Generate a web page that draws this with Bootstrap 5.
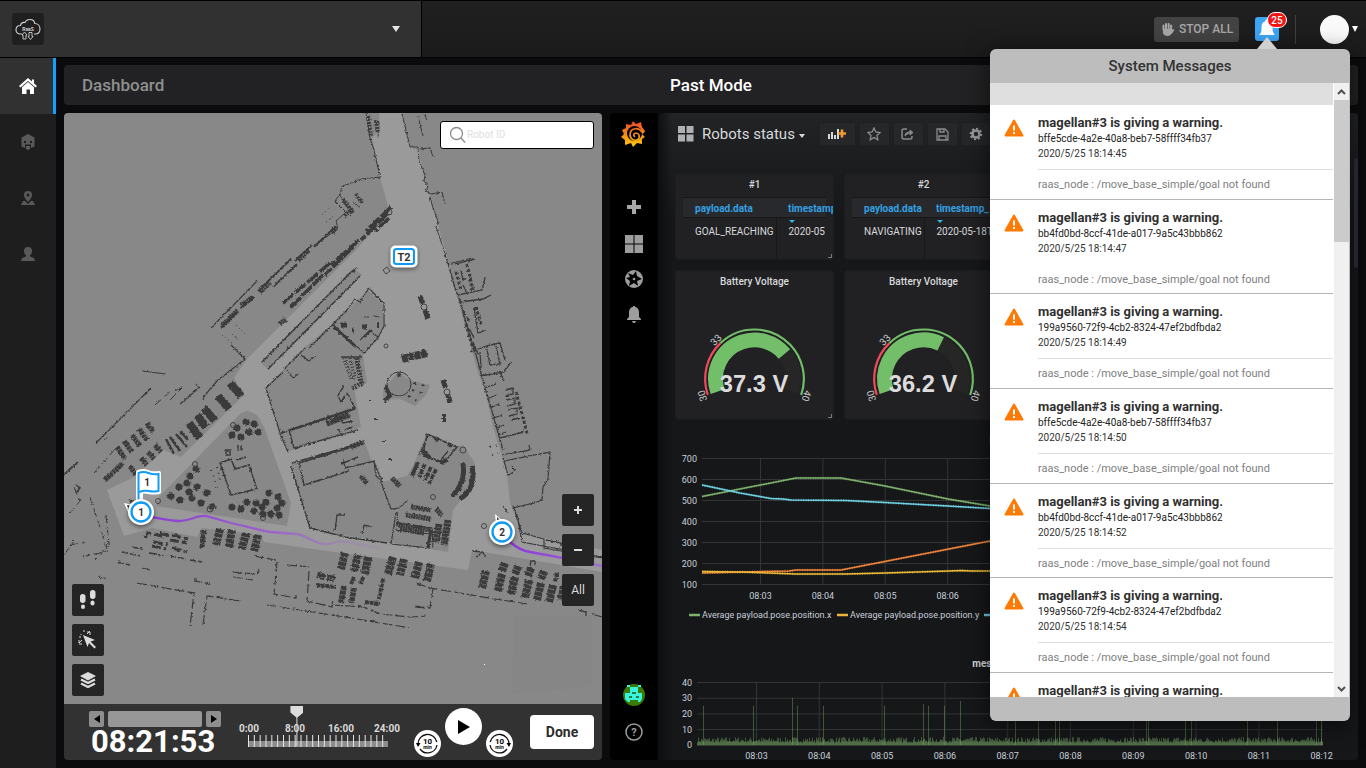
<!DOCTYPE html>
<html lang="en">
<head>
<meta charset="utf-8">
<meta name="viewport" content="width=device-width, initial-scale=1">
<title>Dashboard</title>
<link href="https://cdn.jsdelivr.net/npm/bootstrap@5.3.0/dist/css/bootstrap.min.css" rel="stylesheet">
<style>
body{font-family:Roboto,"Liberation Sans",sans-serif;background:#0b0b0d;color:#d8d9da;font-size:12px;line-height:16px}
button{font-family:inherit}
.topbar{height:58px;border-top:1px solid #000;border-bottom:1px solid #000;background:linear-gradient(#202020,#1b1b1b)}
.site-picker{width:422px;background:#313131;border-right:1px solid #000;padding:0 20px 0 12px}
.logo-box{width:32px;height:32px;background:#1f1f1f;border-radius:3px}
.plain-btn{background:none;border:0;padding:0;color:#e4e4e4;display:flex;align-items:center}
.top-tools{padding-right:8px}
.stop-btn{height:25px;width:85px;background:#434343;color:#a8a8a8;border:0;border-radius:3px;font-size:12px;font-weight:500;white-space:nowrap}
.bell-btn{width:24px;height:24px;background:#3da6f5;border:0;border-radius:3px;padding:0}
.bell-count{top:-5px;left:12px;width:20px;height:16px;border:1px solid #fff;border-radius:8px;background:#f51414;color:#fff;font-size:10px;line-height:15px;font-weight:500;text-align:center}
.rule-v{width:1px;height:29px;background:#404040;margin:0 8px}
.avatar{width:29px;height:29px;border-radius:50%;background:#fafafa;display:block}
.side-nav{width:56px;background:#1e1e1e;flex:none}
.side-nav a{height:56px;color:#595959;display:flex;align-items:center;justify-content:center}
.side-nav a.active{background:#313131;box-shadow:inset -3px 0 #12a0ff}
.workspace{padding:7px 8px 8px;gap:8px;min-width:0}
.title-strip{height:40px;background:#222224;border-radius:4px;font-size:17px;font-weight:500;padding:0 18px;display:grid;grid-template-columns:1fr auto 1fr;align-items:center}
.title-strip h1{font-size:17px;font-weight:500;margin:0;color:#8f8f8f}
.panes{display:grid;grid-template-columns:269fr 374fr;gap:8px}
.pane{border-radius:4px;overflow:hidden;min-width:0}
.map-area{background:#888;overflow:hidden;min-height:520px}
.map-area>svg{position:absolute;width:100%;height:100%}
.search-box{top:8px;right:8px;width:154px;height:28px;background:#fff;border:1px solid #000;border-radius:3px;padding-left:8px}
.search-box input{border:0;outline:0;width:100px;font-size:10px;background:none;padding:0}
.search-box input::placeholder{color:#dedede;opacity:1}
.tool-stack{gap:8px}
.tool-stack button{width:32px;height:32px;background:#252525;border:0;border-radius:2px;color:#dcdcdc;font-size:12px;padding:0;display:flex;align-items:center;justify-content:center}
.stack-left{left:8px;bottom:8px}
.stack-right{right:8px;bottom:98px}
.player{height:56px;background:#323232;padding:0 8px 0 25px}
.clock-box{width:132px;padding-top:3px}
.step-btn{width:15px;height:16px;background:#8e8e8e;border:0;border-radius:2px;padding:0;display:flex;align-items:center;justify-content:center;flex:none}
.date-btn{height:16px;flex:1;background:#979797;border:0;border-radius:2px}
.clock{font-size:31px;line-height:30px;font-weight:700;color:#fff;padding-left:2px}
.timeline{width:184px;height:56px;display:grid;grid-template-rows:16px 14px 26px;margin-left:5px}
.hours{grid-row:2;grid-column:1;display:grid;grid-template-columns:repeat(4,1fr);text-align:center;font-size:10px;line-height:17px;font-weight:700;color:#dadada}
.ticks{grid-row:3;grid-column:1;width:140px;height:12px;margin:1px 0 0 22px}
.timeline input{grid-row:1/4;grid-column:1;appearance:none;-webkit-appearance:none;background:none;width:152px;height:56px;margin:0 16px;padding:0}
.timeline input::-webkit-slider-thumb{-webkit-appearance:none;width:13px;height:41px;margin-top:-12px;background:#dcdcdc;border:0;clip-path:polygon(0 0,13px 0,13px 7px,7px 12px,7px 100%,6px 100%,6px 12px,0 7px)}
.disc{border:0;border-radius:50%;background:#fff;padding:0;display:flex;align-items:center;justify-content:center}
.disc-s{width:27px;height:27px;margin-top:22px}
.disc-l{width:37px;height:37px;margin-bottom:11px}
.done-btn{width:64px;height:34px;border:0;border-radius:4px;background:#fff;color:#2c2c2c;font-size:14px;font-weight:700;margin-left:17px}
.graf{background:#161719}
.graf-nav{width:48px;background:#000;flex:none;padding:8px 0 19px}
.graf-nav a{display:flex}
.nav-first{margin-top:53px}
.nav-next{margin-top:13px}
.graf-body{padding:0 17px;background:linear-gradient(90deg,#0d0e0f 0,#16171900 14px),linear-gradient(#212325,#161719 100px);min-width:0}
.graf-tools{height:60px;padding:9px 0 27px 3px}
.graf-title{font-size:15px;color:#d8d9da}
.g-btn{width:31px;height:24px;background:#262729;border:1px solid #1f2022;border-radius:2px;padding:0;display:flex;align-items:center;justify-content:center;flex:none;color:#8a8b8c}
.g-btn.wide{width:37px;margin-left:14px}
.tiles{display:grid;grid-template-columns:repeat(4,minmax(0,1fr));gap:10px}
.tile{background:#212124;border:1px solid #1c1d1f;border-radius:3px;overflow:hidden;font-size:10px}
.tile-top{height:87px;padding:0 7px}
.tile-low{height:150px}
.of-1{grid-column:1}
.of-2{grid-column:2}
.tile-top.tile{grid-row:1}
.tile-low.tile{grid-row:2}
.tile h2,.chart-box h2{font-size:10px;font-weight:500;line-height:21px;height:20px;margin:0;text-align:center;color:#d8d9da}
.chart-box{margin-top:10px}
.chart-box h2{font-weight:700}
.tile-table{border-collapse:collapse;white-space:nowrap;margin-top:3px;table-layout:fixed;width:100%}
.tile-table th{height:20px;background:#28292c;border-top:1px solid #151618;border-bottom:1px solid #151618;color:#33a2e5;font-weight:700;padding:3px 0 0 12px}
.tile-table td{height:42px;padding:6px 0 0 12px;vertical-align:top;border-bottom:1px solid #1a1b1d}
.tile-table td:first-child{border-right:1px solid #17181a}
.tile-table .c1{width:93px}
.tile-table .c2{width:72px}
.sort-mark{border:3px solid transparent;border-top-color:#33b5e5;top:2px;left:12px}
.corner-mark{right:1px;bottom:1px;width:4px;height:4px;border-right:1px solid #777;border-bottom:1px solid #777}
.chart-box svg,.tile-low svg{display:block;width:100%;height:auto}
.graf-scroll{right:0;top:45px;width:4px;height:110px;background:#2c2d3a;border-radius:2px}
.chart-txt{font-size:9px;fill:#c7d0d9}
.popup{top:49px;right:16px;width:360px;height:672px;border-radius:6px;background:#bdbdbd;z-index:5;color:#333;box-shadow:0 4px 24px #0009}
.popup-arrow{top:-12px;left:267px;width:20px;height:12px;background:#d0d0d0;clip-path:polygon(50% 0,100% 100%,0 100%)}
.popup h2{height:34px;line-height:35px;font-size:15px;font-weight:500;margin:0;text-align:center}
.popup-body{height:614px;background:#fff;overflow:hidden}
.popup-gap{height:22px;background:#dfdfdf}
.msg{height:95px;border-bottom:1px solid #b5b5b5;padding:10px 0 0 14px;display:flex;gap:14px}
.msg:nth-child(3n){height:94px}
.msg svg{flex:none;margin-top:4px}
.msg h3{font-size:13px;line-height:16px;font-weight:700;margin:0;color:#303030}
.msg-id{font-size:10px;line-height:15px;color:#222}
.msg-date{font-size:10px;line-height:15px;color:#333;height:24px;border-bottom:1px solid #dedede}
.msg:nth-child(3) .msg-date{border-color:#fff}
.msg-text{font-size:11px;line-height:30px;color:#808080}
.bar-col{width:17px;background:#f0f0f0;border-left:1px solid #fff;border-right:1px solid #bdbdbd;flex:none}
.bar-thumb{height:142px;background:#cbcbcb}
</style>
</head>
<body>
<div class="d-flex flex-column min-vh-100 position-relative">
<header class="topbar d-flex justify-content-between flex-shrink-0">
  <div class="site-picker d-flex align-items-center justify-content-between">
    <a href="#" class="logo-box d-block" aria-label="RaaS home">
      <svg width="32" height="32" viewBox="0 0 32 32" fill="none" stroke="#d0d0d0"><path d="M10 21H8.500C5.500 21 4 19 4 17c0-3 2-4.500 4.500-4.500C9 10 10.500 9 13 9.500 14 7 16 6.500 18 6.500c3 0 4.500 2 4.700 4C26 10.500 28 13 28 16c0 3-2 5-5 5h-1" stroke-width="1.100"/><path d="M12.500 19l2.500 3h-1v4h-3v-4h-1zM18.500 26.500l-2.500-3h1v-4h3v4h1z" stroke-width=".9"/><text x="16" y="17.500" font-size="5" font-weight="700" fill="#d0d0d0" stroke="none" text-anchor="middle">RaaS</text></svg>
    </a>
    <button class="plain-btn" aria-label="Choose site"><svg width="10" height="8"><path d="M1 1h8L5 7z" fill="#e4e4e4"/></svg></button>
  </div>
  <div class="top-tools d-flex align-items-center">
    <button class="stop-btn d-flex align-items-center justify-content-center gap-1 px-0"><svg width="15" height="15" viewBox="0 0 15 15" fill="none" stroke="#a8a8a8" stroke-width="2" stroke-linecap="round"><path d="M3.500 8V3.500M6 7V2M8.600 7V2M11.100 8V3.500M13.200 8l-2 3"/><path d="M3 7h8.500v3.500c0 2-1.500 3.500-4 3.500S3 12.500 3 10.500z" fill="#a8a8a8" stroke="none"/></svg><span>STOP ALL</span></button>
    <button class="bell-btn position-relative ms-3 me-2" aria-label="System messages"><svg width="24" height="24"><path d="M4 18c2.500-2 2.500-4 2.500-8C6.500 6 9 4.500 10.500 4.300V2.500h3v1.800C16 5 17.500 7 17.500 10c0 4 .5 6 2.500 8z" fill="#fff"/></svg><span class="bell-count position-absolute">25</span></button>
    <span class="rule-v"></span>
    <button class="plain-btn ms-3" aria-label="Account"><span class="avatar"></span><svg width="9" height="8"><path d="M3 1h6L6 7z" fill="#fff"/></svg></button>
  </div>
</header>

<div class="d-flex flex-grow-1">
<nav class="side-nav">
  <a href="#" class="active" aria-label="Home"><svg width="18" height="18" viewBox="0 0 18 18"><path d="M9 1L0 9l1.500 1.500L9 4l7.500 6.500L18 9l-3-2.700V2.500h-2v2z" fill="#fff"/><path d="M3 10.200L9 5l6 5.200V17h-4v-4.500H7.500V17H3z" fill="#fff"/></svg></a>
  <a href="#" aria-label="Robots"><svg width="16" height="18" viewBox="0 0 16 18"><path d="M8 1l6.500 3.500v9L11 15v-3.500H5V15l-3.500-1.500v-9z" fill="#595959"/><path d="M6 13h4v3l-2 1-2-1z" fill="#595959"/><circle cx="5" cy="9" r="1.200" fill="#1e1e1e"/><circle cx="11" cy="9" r="1.200" fill="#1e1e1e"/></svg></a>
  <a href="#" aria-label="Places"><svg width="16" height="18" viewBox="0 0 16 18" fill="#595959"><path fill-rule="evenodd" d="M8 2a4 4 0 0 0-4 4c0 3 4 7 4 7s4-4 4-7a4 4 0 0 0-4-4zm0 2.500a1.500 1.500 0 1 1 0 3 1.500 1.500 0 0 1 0-3z"/><path d="M1 16l2-4h2l3 3 3-3h2l2 4z"/></svg></a>
  <a href="#" aria-label="Users"><svg width="16" height="18" viewBox="0 0 16 18" fill="#595959"><path d="M8 2c3 0 4 1.800 4 4 0 2-1 3.500-2 4.500v1l4 1.500 1 3H1l1-3 4-1.500v-1C5 9.500 4 8 4 6c0-2.200 1-4 4-4z"/></svg></a>
</nav>

<main class="workspace d-flex flex-column flex-grow-1">
  <div class="title-strip"><h1>Dashboard</h1><span class="text-white">Past Mode</span></div>
  <div class="panes flex-grow-1">
    <section class="pane d-flex flex-column">
      <div class="map-area position-relative flex-grow-1">
        <svg viewBox="64 113 538 591" preserveAspectRatio="xMinYMin slice" role="img" aria-label="Site map">
          <defs>
            <filter id="rough" x="0" y="0" width="100%" height="100%"><feTurbulence type="fractalNoise" baseFrequency=".45" numOctaves="2" seed="4"/><feDisplacementMap in="SourceGraphic" scale="3" xChannelSelector="R" yChannelSelector="G"/></filter>
            <linearGradient id="trail" gradientUnits="userSpaceOnUse" x1="152" y1="0" x2="385" y2="0"><stop stop-color="#8b3fd6"/><stop offset=".5" stop-color="#9c62cb"/><stop offset="1" stop-color="#9a8aab" stop-opacity=".3"/></linearGradient>
            <linearGradient id="trail2" gradientUnits="userSpaceOnUse" x1="510" y1="0" x2="602" y2="0"><stop stop-color="#8b35dd"/><stop offset="1" stop-color="#a070cc"/></linearGradient>
          </defs>
          <path fill="#9a9a9a" d="M379 113H402L410 147H418L423 173 430 197 448 260 457 297 478 373 485 390 493 427 507 473 510 503 522 533 602 550V572L472 550 468 570 341 553 264 542 261 535 202 528 197 537 152 528 124 536 107 490 134 477 164 450 181 457 244 395 234 378 246 360 354 252 390 212 382 185 380 177 372 138 380 130z"/>
          <g fill="#888">
            <path d="M241 413L248 411 257 415 264 427 291 503 287 526 156 506 159 497z"/>
            <path d="M261 363L353 268 362 275 268 369z"/>
            <path d="M266 388L306 346 332 325 368 290 383 305 383 327 378 340 363 355 367 383 354 387 361 427 287 452 281 433z"/>
            <path d="M291 463L365 443 375 470 382 482 407 476 415 462 418 453 427 433 457 447 463 445 475 463 473 483 453 510 448 552 330 533 311 528z"/>
            <path d="M398 372L410 380 430 385 426 395 415 406 400 399 383 400 383 390z"/>
            <path d="M514 616h78v70l-80 8z" fill="#868686"/>
          </g>
          <g fill="none" stroke="#3a3a3a" filter="url(#rough)">
            <path stroke-width="1" d="M366 113l4 25 4 12 4 18 3 9M381 177l-20 2-9 4-10 3-2 8-5 7 8 8 8 8M340 195l5 10M352 202l8 5M345 213l-9 8 2 7-18 14M402 114l8 33h8l1 14 6 14-1 6 4 5-2 5 5 3 11-2 3 12M418 116l5 20 M424 114l3 6M420 149l10-1 3 9M430 197l3 11 5 13-2 6 7 20 5 17 24-6M374 120l5 2-1 15"/>
            <path stroke-width="4" stroke-dasharray="2 1" d="M368 116l3 20M376 121l2 12M343 199l10 14M356 194l6 9M345 216l8-9"/>
            <path stroke-width="1.300" d="M448 263l7 25 5 13 4 15 7 23 6 19 8 30 8 27 10 35M455 264l20-5M458 295l24-5 3-12M460 302l23-3 8-4M470 352l20-7 10-2 5 17M480 376l24-4 7-10M484 388l12-4M491 407l8-3M494 418l8-3M496 428l8-3M498 435l8-3M500 438l24-6M489 398l8-3M461 271l2 9 3-2M463 285l4 8M470 290l3-3M463 310l6 11M474 308l4 25 8-3M469 328l5 10M473 342l5 12M487 349l3 16 10-1-4-18M480 352l1 16M500 372l4 9M505 390l8-2v6l-8 2M506 400l9-2v6l-8 2M508 410l9-2v6l-8 2M511 420l8-2"/>
            <path stroke-width="3" stroke-dasharray="3 2" d="M456 272l5 18M467 264l6 26M476 307l5 17M466 324l8 28M516 392l11 41"/>
            <path stroke-width="1.200" d="M502 455l28-5-1-5M503 458l5 17 6-3M504 461l46-9-2 27-5 8-1 13-8 3-21 5 4 7 5 27 80 15M512 466l3 5M513 505l9 28M508 513l-5-7M522 533l22 6v9l58 10"/>
            <path stroke-width="3.500" stroke-dasharray="14 2" d="M391 207L366 231M388 213L361 240M359 240L331 265M354 246L325 275M330 263L282 304M323 275L289 309M389 218l-14 13"/>
            <path stroke-width="1.200" d="M211 328L257 281"/>
            <path stroke-width="2" d="M258 291L291 259M273 287L297 264M221 328L237 312M241 308L254 297M295 261L312 245M314 247L336 226"/>
            <path stroke-width="5" stroke-dasharray="2 .5" d="M222 326L238 310M241 306L253 297M260 292L270 283M298 260L309 250M332 232L336 228M280 324l6-5"/>
            <path stroke-width="1" stroke-dasharray="1 3" d="M222 335l10 8M236 325l10 10M232 334l6 6M326 222l10-8M322 215l8-8"/>
            <path stroke-width="1.600" d="M262 362L350 273 357 268M268 369L360 276"/>
            <path stroke-width="1.200" d="M231 345l14 14-28 22-12 14-2 5M266 388l17-16M284 369l21-21M309 348l23-23 14-14 9-12 5 3 9-14 15 16v22l-6 12-14 15-31-28M142 371l24 3M180 404l20-17M196 384l3 4M151 388l-22 22-33 33M266 388l6 20 9 28 7 16M301 355l8 6 6-5M287 370l6 8 5-4M360 340l10-10 8 7M364 337l8-7M364 317h5M374 316l6 1"/>
            <path stroke-width="2.500" d="M334 327l22 20"/>
            <path stroke-width="5" d="M341 325h6M352 330h2M362 327h5M377 325h2"/>
            <path stroke-width="5" stroke-dasharray="2 1" d="M357 358l4 25M352 388l12-5"/>
            <path stroke-width="4" stroke-dasharray="1 2" d="M344 358l8 22M350 358l6 22"/>
            <path stroke-width="1.400" d="M341 357h21M344 385l-6 11 3 6 4-7M347 393l8 15-66 22 5 18 64-18M289 431l66-22M295 449l7-3M299 463l5 22 45-14M292 463l70-20M341 464l17-7M299 463l50-15M291 466l19 62 35 9 42 6M343 459l2 9 30-7M382 480l-4-8-4-10M281 433l8-2M326 423l2-7 4 6 6-8 5 9 10-2M338 429l5 8M344 430l9-3"/>
            <path stroke-width="5" stroke-dasharray="3 .5" d="M327 424l23-9M333 421l16-7M350 447l14-5"/>
            <circle cx="399" cy="384" r="12"/><path stroke-width="4" d="M385 386l5 10-6 5M398 374l2 2"/>
            <path stroke-width="2" stroke-dasharray="2 6" d="M414 383l15 4M412 390l14 4M408 396l11 6"/>
            <path stroke-width="8" stroke-dasharray="6 .5" d="M402 359l25-6"/><path stroke-width="5" stroke-dasharray="8 7 9" d="M420 296l8 23M443 380l8 25"/>
            <path stroke-width="1.400" d="M427 434l30 13-14 17-20-10zM428 436l-9 19M423 456l17 5 8-10"/><path stroke-width="4" d="M435 438l4 2M448 444l4 2M444 414v8M376 418v2M384 441v1M390 459v1M371 400v1M422 450l8 8M440 462l8-2"/>
            <path stroke-width="4" d="M418 462l-6 14"/><path stroke-width="3.500" stroke-dasharray="5 1" d="M425 464l-6 13M431 467l-6 13M436 469l-7 15"/>
            <path stroke-width="5" d="M463 463c2 14-2 25-11 33M472 466c3 15-1 26-12 33"/>
            <path stroke-width="1.200" d="M374 462l2 14 5 4 2 8 8 21 8-1 9-8M396 512l-5 32 39 4M397 512l1 11 34 5 1 20M395 530l35 4-3 14"/>
            <path stroke-width="5" stroke-dasharray="2 .5" d="M411 507l20 3M406 515l25 4M396 524l35 6M400 529l24 4M436 509l6 6M361 476l6 8M392 478l8 8"/>
            <path stroke-width="7" stroke-dasharray="3 .5" d="M439 524l-3 18M448 520l-4 25"/>
            <path stroke-width="3" d="M431 530l-3 18"/>
            <path stroke-width="8" stroke-dasharray="16 0" d="M230 383l11 13M218 396l11 13M204 408l11 13M197 415l9 12M189 423l11 15"/>
            <path stroke-width="2.500" d="M166 439l8 15M170 437l10 14M176 434l11 13M180 431l8 9M239 388l4 7M188 425l5 10"/>
            <path stroke-width="5" stroke-dasharray="3 .5" d="M117 447l8 12M124 441l8 11M132 435l8 11M139 429l8 11M147 423l6 9M130 466l6 9M141 458l6 7M148 452l6 7M155 445l6 7M105 480l18-17"/>
            <path stroke-width="1" stroke-dasharray="8 4" d="M94 473l22-25M74 487l6 14-10 12M70 545l14-3M90 497l17 52M82 557l26-6M64 555l10-14M155 405l18-16M170 400l12-12M175 391l10-6M104 440l4-3M106 515l3 30-14 15M98 577l12 2"/>
            <path stroke-width="1.500" d="M64 475l14-13M76 485l4 3-4 5M129 500l5 3"/>
            <path stroke-width="3" stroke-dasharray="9 3" d="M145 538l3-5 18 4M154 542l14 3M170 540l17 3M152 546l14 3M172 548l15 4M160 533l10 3M172 535l16 4"/>
            <path stroke-width="1.500" stroke-dasharray="6 2" d="M122 552l18 4M118 562l12 3M150 553l16 3M170 556l16 3M190 560l12 2M132 547l10 2"/>
            <path stroke-width="1.200" stroke-dasharray="10 3" d="M136 583l58 10-4 33M203 625l4-29 33 5M267 605l84 13 59 10M142 568l8 2M195 578v3l15 3M232 572l25 2 2-5M233 577l20 3M254 556l22 4M277 562l-3 32 22 4v-3M287 565l23 2M309 571l-2 30 25 6 1-8M332 605l32 2 16 7 30 3 16-1M416 583l14 5 65 11 33 5M433 588l-3 20-15-2M415 607l10 1"/>
            <g stroke-width="8" stroke-dasharray="4 .6">
              <path stroke-width="5" d="M204 530l-2 18"/><path d="M220 529l-4 16M232 530l-3 17M246 533l-4 16M258 535l-4 16M345 553l-4 16M358 555l-4 16M368 557l-3 17M393 557l-5 17M404 559l-4 16M419 562l-4 16M431 564l-4 17M486 571l-4 17M502 574l-4 17M515 577l-4 17M529 580l-4 18M541 583l-4 17M553 585l-4 17M564 586l-3 14M505 563l-3 8M518 566l-3 8M531 568l-3 8M544 571l-3 8M322 573l-2 6M332 575l-2 6"/>
              <path stroke-width="4" d="M557 573l-2 9M383 579l-4 20M354 577l-3 7M363 577l-2 7M365 602l15 2M316 585l20 2"/><path stroke-width="6" d="M344 586l-3 17M354 588l-3 15"/>
            </g>
            <path stroke-width="1.300" d="M472 551l11 1 2 5M482 552l-5 5M530 565l1-4h4v4M546 540l20 4M560 545h12M335 530l2-15h8M362 533l2-8 8 2M578 610l8 2v4M592 614l10 3"/>
            <path stroke-width="7" stroke-linecap="round" stroke-dasharray="0 3" d="M237 428h3M246 422h3M254 424h3M232 435h3M241 437h1M249 432h2M258 432h2M196 469h2M190 476h2M179 487h2M187 483h1M171 496h2M180 500h2M192 498h3M189 492h1M197 487h2M201 503h2M207 493h2M212 507h2M232 507h2M241 509h2M247 502h2M256 503h2M266 502h2M269 493h1M278 497h2M254 511h2M262 507h1M263 514h2M271 514h1M279 515h1M277 508h2M282 503h1"/>
            <path stroke-width="1.500" d="M220 463l11-4 4 10 14-4 8 24-26 6zM236 460l10-3M226 450h4v5h-4zM238 445v6M241 445v6"/>
            <path stroke-width="2" stroke-dasharray="1 5" d="M211 470l6 18M217 467l4 15M490 447l8-2M492 455l6-2"/>
          </g>
          <g fill="none" stroke="#444"><circle cx="389" cy="212" r="3"/><path d="M383 270l4-3 3 4-4 3z"/><circle cx="386" cy="346" r="2"/><circle cx="463" cy="450" r="3"/><circle cx="433" cy="497" r="2.500"/><circle cx="484" cy="526" r="2.500"/><circle cx="158" cy="501" r="2.500"/><circle cx="195" cy="464" r="2.500"/><circle cx="210" cy="509" r="3"/><circle cx="263" cy="518" r="2.500"/><circle cx="233" cy="425" r="2.500"/><circle cx="424" cy="307" r="3"/><circle cx="447" cy="392" r="3"/></g>
          <g fill="none" stroke-width="2.300" stroke-linecap="round"><path stroke="url(#trail)" d="M152 517C162 519 170 521 179 521C190 521 197 515 206 516L231 523C245 526 258 530 271 532L297 534C308 536 315 544 324 544C330 545 336 541 341 541C352 542 365 546 380 548"/><path stroke="url(#trail2)" d="M510 542C516 547 522 551 530 552L563 558 602 566"/></g>
          <path d="M484 664h1v1h-1z" fill="#fff"/>
          <g font-weight="700" font-size="11" text-anchor="middle" fill="#333">
            <rect x="390.500" y="245.500" width="27" height="22" rx="5" fill="#fff" style="filter:drop-shadow(0 2px 2px #0006)"/><rect x="394" y="249" width="20" height="15" rx="2.500" fill="#fff" stroke="#0c99f7" stroke-width="2"/><text x="404" y="261">T2</text>
            <path d="M138 505V472q5-2 10 0t11 1v19q-5 1-11 0l-7-1v13" fill="#fff" stroke="#fff" stroke-width="4" stroke-linejoin="round"/><path d="M138.500 505V473q5-2 10 0t10 1v17q-5 1-10 0t-9 1" fill="#fff" stroke="#129df8" stroke-width="2"/><text x="147" y="486" font-size="10">1</text>
            <path d="M124 503l9 2-5 7zM495 514l10 9-9 3z" fill="#fff"/><path d="M127 505l5 1-3 5zM497 517l5 5-5 1z" fill="#333"/>
            <g style="filter:drop-shadow(0 2px 2px #0007)"><circle cx="141" cy="512" r="13" fill="#fff"/><circle cx="502" cy="532" r="13" fill="#fff"/></g><circle cx="141" cy="512" r="9.500" fill="#fff" stroke="#0c99f7" stroke-width="2.300"/><circle cx="502" cy="532" r="9.500" fill="#fff" stroke="#0c99f7" stroke-width="2.300"/><text x="141" y="516" font-size="10">1</text><text x="502" y="536" font-size="10">2</text>
          </g>
        </svg>
        <label class="search-box position-absolute d-flex align-items-center"><svg width="18" height="18" fill="none" stroke="#8c8c8c" stroke-width="1.300"><circle cx="7.500" cy="7.500" r="6"/><path d="M12 12l4 4.500"/></svg><input type="text" placeholder="Robot ID" aria-label="Robot ID"></label>
        <div class="tool-stack stack-left position-absolute d-flex flex-column">
          <button aria-label="Footprints"><svg width="18" height="20" viewBox="0 0 18 20" fill="#dcdcdc"><rect x="1" y="4" width="5.500" height="9" rx="2.700"/><rect x="2" y="14.500" width="4" height="4.500" rx="2"/><rect x="11" y="0" width="5.500" height="9" rx="2.700"/><rect x="11.500" y="10.500" width="4" height="5" rx="2"/></svg></button>
          <button aria-label="Select area"><svg width="20" height="20" viewBox="0 0 20 20" fill="#dcdcdc"><path d="M5 5l12 5-4.500 1.500L18 17l-1.500 1.500-5.500-5.500L9.500 17z"/><path d="M9 2h3v3M5 1h2M1 13v-3M1 14h3M12 1l-3 3M1 13l3-3M1 7h2M3 5V4" stroke="#dcdcdc" fill="none"/></svg></button>
          <button aria-label="Layers"><svg width="18" height="18" viewBox="0 0 18 18"><path d="M9 1l8 4-8 4.500L1 5z" fill="#dcdcdc"/><path d="M2 8.500L9 12l7-3.500M2 12.500L9 16l7-3.500" fill="none" stroke="#dcdcdc" stroke-width="2.200"/></svg></button>
        </div>
        <div class="tool-stack stack-right position-absolute d-flex flex-column"><button aria-label="Zoom in"><svg width="8" height="8"><path d="M0 4h8M4 0v8" stroke="#dcdcdc" stroke-width="2"/></svg></button><button aria-label="Zoom out"><svg width="8" height="8"><path d="M0 4h8" stroke="#dcdcdc" stroke-width="2"/></svg></button><button>All</button></div>
      </div>
      <div class="player d-flex align-items-center flex-shrink-0">
        <div class="clock-box">
          <div class="d-flex gap-1"><button class="step-btn" aria-label="Previous day"><svg width="6" height="8"><path d="M6 0v8L0 4z"/></svg></button><button class="date-btn" aria-label="Choose date"></button><button class="step-btn" aria-label="Next day"><svg width="6" height="8"><path d="M0 0v8l6-4z"/></svg></button></div>
          <div class="clock">08:21:53</div>
        </div>
        <div class="timeline">
          <div class="hours"><span>0:00</span><span>8:00</span><span>16:00</span><span>24:00</span></div>
          <svg class="ticks" viewBox="0 0 140 12" preserveAspectRatio="none"><path d="M0 6h140v6H0z" fill="#8c8c8c"/><path d="M0 6H140" pathLength="24" stroke="#e8e8e8" stroke-width="12" stroke-dasharray=".17 .83" fill="none"/></svg>
          <input type="range" min="0" max="24" step="any" value="8.360" aria-label="Time of day">
        </div>
        <div class="d-flex align-items-center gap-1 ms-auto">
          <button class="disc disc-s" aria-label="Back 10 min"><svg width="25" height="25" viewBox="0 0 25 25"><path d="M3 13A9.500 9.500 0 0 1 21.800 11M22 14a9.500 9.500 0 0 1-17 4" fill="none" stroke="#111" stroke-width="1.300"/><path d="M1 12h4.500L3 16z"/><text x="12.500" y="13" font-size="8" font-weight="700" text-anchor="middle">10</text><text x="12.500" y="18" font-size="5" font-weight="700" text-anchor="middle">min</text></svg></button>
          <button class="disc disc-l" aria-label="Play"><svg width="15" height="14"><path d="M2 0v14l12-7z"/></svg></button>
          <button class="disc disc-s" aria-label="Forward 10 min"><svg width="25" height="25" viewBox="0 0 25 25"><path d="M22 13A9.500 9.500 0 0 0 3.200 11M3 14a9.500 9.500 0 0 0 17 4" fill="none" stroke="#111" stroke-width="1.300"/><path d="M24 12h-4.500l2.500 4z"/><text x="12.500" y="13" font-size="8" font-weight="700" text-anchor="middle">10</text><text x="12.500" y="18" font-size="5" font-weight="700" text-anchor="middle">min</text></svg></button>
        </div>
        <button class="done-btn">Done</button>
      </div>
    </section>

    <section class="pane graf d-flex position-relative">
      <nav class="graf-nav d-flex flex-column align-items-center">
        <a href="#" aria-label="Grafana"><svg width="26" height="26" viewBox="0 0 26 26"><defs><linearGradient id="sun" gradientUnits="userSpaceOnUse" x1="0" y1="1" x2="0" y2="25"><stop stop-color="#f04a28"/><stop offset="1" stop-color="#fbca0a"/></linearGradient></defs><path fill="url(#sun)" d="M12 0l3 3 5-2 1 5 3 4-1 2-2 1 3 3-3 2v5l-5-1-4 4-2-4-6 2v-5l-4-3 3-3-2-4 4-2V3l5 1z"/><circle cx="13.500" cy="12.500" r="7.500" fill="#000"/><path d="M21 11c-2-3-5-4-8-3-4 1-5 6-3 9s7 3 8 0-1-5-3-5-3 2-1.500 3.500" fill="none" stroke="url(#sun)" stroke-width="1.700" stroke-linecap="round"/></svg></a>
        <a href="#" class="nav-first" aria-label="Create"><svg width="14" height="14"><path d="M0 7h14M7 0v14" stroke="#a6a6a6" stroke-width="4"/></svg></a>
        <a href="#" class="mt-3 pt-1" aria-label="Dashboards"><svg width="20" height="22" viewBox="0 0 20 22" fill="#9d9d9d"><path d="M1 1h8.500v8.500H1zM10.500 1H19v8.500h-8.500zM1 10.500h8.500V19H1zM10.500 10.500H19V19h-8.500z"/></svg></a>
        <a href="#" class="nav-next" aria-label="Explore"><svg width="20" height="20" viewBox="0 0 20 20"><circle cx="10" cy="10" r="9" fill="#9d9d9d"/><path d="M4 4l5 2 3-4 1 5 5 3-5 2 1 5-4-3-5 3 1-5-4-3 4-1z"/><circle cx="10" cy="10" r="1.300" fill="#9d9d9d"/></svg></a>
        <a href="#" class="mt-3" aria-label="Alerting"><svg width="16" height="18" viewBox="0 0 16 18" fill="#9d9d9d"><path d="M1 15v-1l2-2V7c0-3 2-5 4-5V1h2v1c2 0 4 2 4 5v5l2 2v1zM6 16h4l-1 2H7z"/></svg></a>
        <a href="#" class="mt-auto" aria-label="Profile"><svg width="22" height="24" viewBox="0 0 22 24"><circle cx="11" cy="12" r="11" fill="#3c7a06"/><path d="M4 2h3v2H4zM15 2h3v2h-3zM7 4h8v6h4v6l-2 3h-2v-2H7v2H5l-3-3v-6h5z" fill="#39f4dd"/><path d="M9 9h4v2H9zM6 13h3v2H6zM13 13h3v2h-3z" fill="#2b7a3f"/></svg></a>
        <a href="#" class="mt-3" aria-label="Help"><svg width="18" height="18"><circle cx="9" cy="9" r="8" fill="none" stroke="#9d9d9d" stroke-width="1.500"/><text x="9" y="13" font-size="11" font-weight="700" text-anchor="middle" fill="#9d9d9d">?</text></svg></a>
      </nav>
      <div class="graf-body flex-grow-1">
        <div class="graf-tools d-flex align-items-center">
          <svg width="16" height="16" fill="#b0b0b0"><path d="M0 0h7v7H0zM8.500 0h7v7h-7zM0 8.500h7v7H0zM8.500 8.500h7v7h-7z"/></svg>
          <button class="plain-btn graf-title ms-2">Robots status<svg width="6" height="4" class="ms-1 mt-1"><path d="M0 0h6L3 4z" fill="#d8d9da"/></svg></button>
          <div class="d-flex" style="gap:3px">
            <button class="g-btn wide" aria-label="Add panel"><svg width="20" height="14"><path d="M1 7h2v5H1zM4 5h2v7H4zM7 8h2v4H7zM10 2h2v10h-2z" fill="#d8d9da"/><path d="M11 6.500h8M15 2.500v8" stroke="#f29a34" stroke-width="2.600"/></svg></button>
            <button class="g-btn" aria-label="Star"><svg width="14" height="14" fill="none" stroke="#8a8b8c" stroke-width="1.300"><path d="M7 1l1.800 4 4.200.5-3 3 .8 4.200L7 10.600l-3.800 2.100.8-4.200-3-3L5.200 5z"/></svg></button>
            <button class="g-btn" aria-label="Share"><svg width="14" height="14" fill="none" stroke="#8a8b8c" stroke-width="1.500"><path d="M6 2H3Q1 2 1 4v6q0 2 2 2h6q2 0 2-2V9"/><path d="M4 9q0-4 5-4V3l3 2.500L9 8V6" fill="#8a8b8c" stroke-width="1"/></svg></button>
            <button class="g-btn" aria-label="Save"><svg width="13" height="13" fill="none" stroke="#8a8b8c" stroke-width="1.300"><path d="M1 1h8l3 3v8H1zM4 1v3h4V1M3 12V8h7v4"/></svg></button>
            <button class="g-btn" aria-label="Settings"><svg width="14" height="14"><circle cx="7" cy="7" r="3.500" fill="none" stroke="#9a9b9c" stroke-width="2.600"/><circle cx="7" cy="7" r="5.300" fill="none" stroke="#9a9b9c" stroke-width="2" pathLength="16" stroke-dasharray="1 1"/></svg></button>
          </div>
        </div>
        <div class="tiles" id="tiles"></div>
        <div class="chart-box"><h2>Position</h2>
          <svg viewBox="675 450 666 193" role="img" aria-label="Position chart" id="chart1"></svg></div>
        <div class="chart-box"><h2>messages / min</h2>
          <svg viewBox="675 673 666 87" role="img" aria-label="Message chart" id="chart2"></svg></div>
      </div>
      <span class="graf-scroll position-absolute"></span>
    </section>
  </div>
</main>
</div>

<aside class="popup position-absolute" aria-label="System messages">
  <span class="popup-arrow position-absolute"></span>
  <h2>System Messages</h2>
  <div class="popup-body d-flex"><div class="flex-grow-1" id="messages"><div class="popup-gap"></div></div>
    <div class="bar-col d-flex flex-column"><svg width="15" height="17" fill="none" stroke="#505050" stroke-width="2"><path d="M4 11l3.500-3.500L11 11"/></svg><div class="bar-thumb"></div><svg class="mt-auto" width="15" height="17" fill="none" stroke="#505050" stroke-width="2"><path d="M4 7l3.500 3.500L11 7"/></svg></div>
  </div>
</aside>
</div>
<script src="https://cdn.jsdelivr.net/npm/bootstrap@5.3.0/dist/js/bootstrap.bundle.min.js"></script>
<script>
const ids=['bffe5cde-4a2e-40a8-beb7-58ffff34fb37','bb4fd0bd-8ccf-41de-a017-9a5c43bbb862','199a9560-72f9-4cb2-8324-47ef2bdfbda2'];
document.getElementById('messages').insertAdjacentHTML('beforeend',[45,47,49,50,52,54,55].map((s,i)=>`<article class="msg"><svg width="20" height="18"><path d="M10 1.500L18.500 16.500H1.500z" fill="#ff7a05" stroke="#ff7a05" stroke-width="2" stroke-linejoin="round"/><path d="M10 6.500v5M10 13v2" stroke="#fff" stroke-width="2"/></svg><div class="flex-grow-1"><h3>magellan#3 is giving a warning.</h3><div class="msg-id">${ids[i%3]}</div><div class="msg-date">2020/5/25 18:14:${s}</div><div class="msg-text">raas_node : /move_base_simple/goal not found</div></div></article>`).join(''));

// A state table and a battery gauge for each robot
const robots=[['GOAL_REACHING','2020-05','c1',37.3],['NAVIGATING','2020-05-18T','c2',36.2]];
const sweep=218;
const ring=(r,w,c,from,len)=>`<circle cx="79.500" cy="89" r="${r}" fill="none" stroke="${c}" stroke-width="${w}" pathLength="360" stroke-dasharray="${len} 360" transform="rotate(${161+from} 79.500 89)"/>`;
document.getElementById('tiles').innerHTML=robots.map((r,i)=>{
const p=(r[3]-30)/10*sweep;
return `<div class="tile tile-top of-${i+1} position-relative"><h2>#${i+1}</h2><table class="tile-table"><tr><th class="${r[2]}">payload.data</th><th>timestamp_</th></tr><tr><td>${r[0]}</td><td class="position-relative"><span class="sort-mark position-absolute"></span>${r[1]}</td></tr></table><span class="corner-mark position-absolute"></span></div>
<div class="tile tile-low of-${i+1} position-relative"><h2>Battery Voltage</h2><svg viewBox="0 0 159 128">${ring(50,2.2,'#f2495c',0,.3*sweep)}${ring(50,2.2,'#73bf69',.3*sweep,.7*sweep)}${ring(39.5,15,'#262626',0,sweep)}${ring(39.5,15,'#73bf69',0,p)}<text x="79" y="102" text-anchor="middle" font-family="Liberation Sans" font-size="24" font-weight="700" fill="#dcdcdc">${r[3]} V</text><g font-size="10" fill="#c8c8c8" text-anchor="middle"><text transform="translate(30 105) rotate(-108)">30</text><text transform="translate(43 52) rotate(-46)">33</text><text transform="translate(129 105) rotate(108)">40</text></g></svg><span class="corner-mark position-absolute"></span></div>`}).join('');

let a='';
for(let i=0;i<7;i++){const y=458.5+i*21;a+=`<path d="M702 ${y}H1325" stroke="#333436"/><text class="chart-txt" x="697" y="${y+3}" text-anchor="end">${700-i*100}</text>`}
['08:03','08:04','08:05','08:06'].forEach((h,i)=>{const x=760.5+i*62.4;a+=`<path d="M${x} 458V585" stroke="#333436"/><text class="chart-txt" x="${x}" y="599" text-anchor="middle">${h}</text>`});
[['#7eb26d','702,496.500 796,478 841,478 885,486 948,499 990,506 1060,520 1325,490'],['#6ed0e0','702,485 740,493 771,498.500 783,499 791,500 846,500.500 885,502.500 948,506 990,508.500 1325,515'],['#ef843c','702,573 789,571 796,570 841,570 990,541 1325,500'],['#eab839','702,571.500 740,572 796,574 846,574 885,573 949,571 961,570.500 971,571 990,571 1325,572']].forEach(s=>a+=`<polyline points="${s[1]}" fill="none" stroke="${s[0]}" stroke-width="1.500"/><polyline points="${s[1]}" fill="none" stroke="${s[0]}" stroke-width="2.500" stroke-dasharray="1 1.500" opacity=".6"/>`);
[[689,'#7eb26d','Average payload.pose.position.x'],[837,'#eab839','Average payload.pose.position.y'],[984,'#6ed0e0','']].forEach(l=>a+=`<path d="M${l[0]} 615h11" stroke="${l[1]}" stroke-width="2.500"/><text class="chart-txt" x="${l[0]+13}" y="618">${l[2]}</text>`);
document.getElementById('chart1').innerHTML=a;

let b='',seed=7,bars='';
const rnd=()=>(seed=(seed*16807)%2147483647)/2147483647;
for(let i=0;i<5;i++){const y=682.5+i*15.7;b+=`<path d="M697 ${y}H1323" stroke="#333436"/><text class="chart-txt" x="692" y="${y+3}" text-anchor="end">${40-i*10}</text>`}
['08:03','08:04','08:05','08:06','08:07','08:08','08:09','08:10','08:11','08:12'].forEach((h,i)=>{const x=756.5+i*62.8;b+=`<path d="M${x} 682V745" stroke="#333436"/><text class="chart-txt" x="${x}" y="759" text-anchor="middle">${h}</text>`});
for(let x=697.5;x<1323;x++)bars+=`M${x} 745v-${(2+rnd()*6).toFixed(1)}`;
b+=`<path d="M697 743.500H1323" stroke="#7eb26d" stroke-width="4" opacity=".25"/><path d="${bars}" stroke="#7eb26d" opacity=".4"/>`;
[[703.5,25],[753.5,25],[792.5,30],[797.5,25],[823.5,25],[884.5,25],[923.5,26],[928.5,25],[944.5,25],[960.5,28],[1015.5,27],[1038.5,25],[1055.5,26],[1059.5,25],[1146.5,25],[1148.5,25],[1185.5,26],[1191.5,25],[1247.5,25],[1277.5,25],[1316.5,25],[1321.5,28]].forEach(s=>b+=`<path d="M${s[0]} 745v-${s[1]*1.57}" stroke="#7eb26d" opacity=".4"/>`);
document.getElementById('chart2').innerHTML=b;
</script>
</body>
</html>
